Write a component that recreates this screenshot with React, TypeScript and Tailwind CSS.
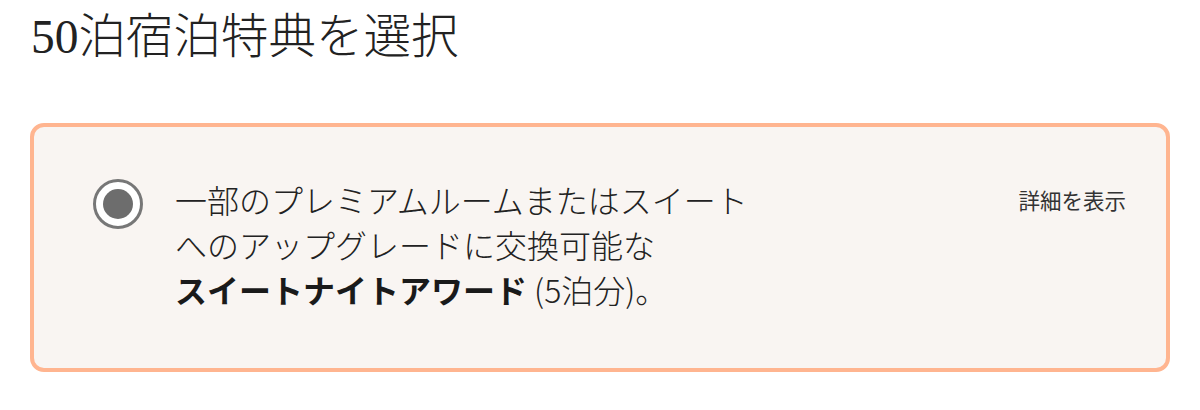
export default function App() {
  return (
    <div className="w-[1200px] h-[410px] bg-white flex flex-col">
      <h1 className="pl-[31px] pt-[5px] h-[62px] leading-[56px] text-[47.5px] font-normal text-[#222] font-['Liberation_Serif',serif]">
        50<span className="font-['Noto_Sans_CJK_JP',sans-serif] font-light">泊宿泊特典を選択</span>
      </h1>

      <div className="mt-[61px] mx-[30px] h-[249px] rounded-[14px] border-4 border-[#ffb590] bg-[#f9f5f2] pl-[59px] pr-[40px] pt-[50px] flex items-start font-['Noto_Sans_CJK_JP',sans-serif]">
        <div className="mt-[2px] w-[50px] h-[50px] shrink-0 rounded-full border-[3px] border-[#777] bg-white flex items-center justify-center">
          <div className="w-[30px] h-[30px] rounded-full bg-[#6d6d6d]" />
        </div>

        <div className="ml-[32px] flex flex-col text-[32px] font-light text-[#222]">
          <p className="h-[45px] leading-[45px]">一部のプレミアムルームまたはスイート</p>
          <p className="h-[45px] leading-[45px]">へのアップグレードに交換可能な</p>
          <p className="h-[45px] leading-[45px]">
            <span className="font-bold text-[#1a1a1a]">スイートナイトアワード</span> (5泊分)。
          </p>
        </div>

        <button className="ml-auto text-[21.5px] leading-[45px] font-normal text-[#333]">詳細を表示</button>
      </div>
    </div>
  );
}
